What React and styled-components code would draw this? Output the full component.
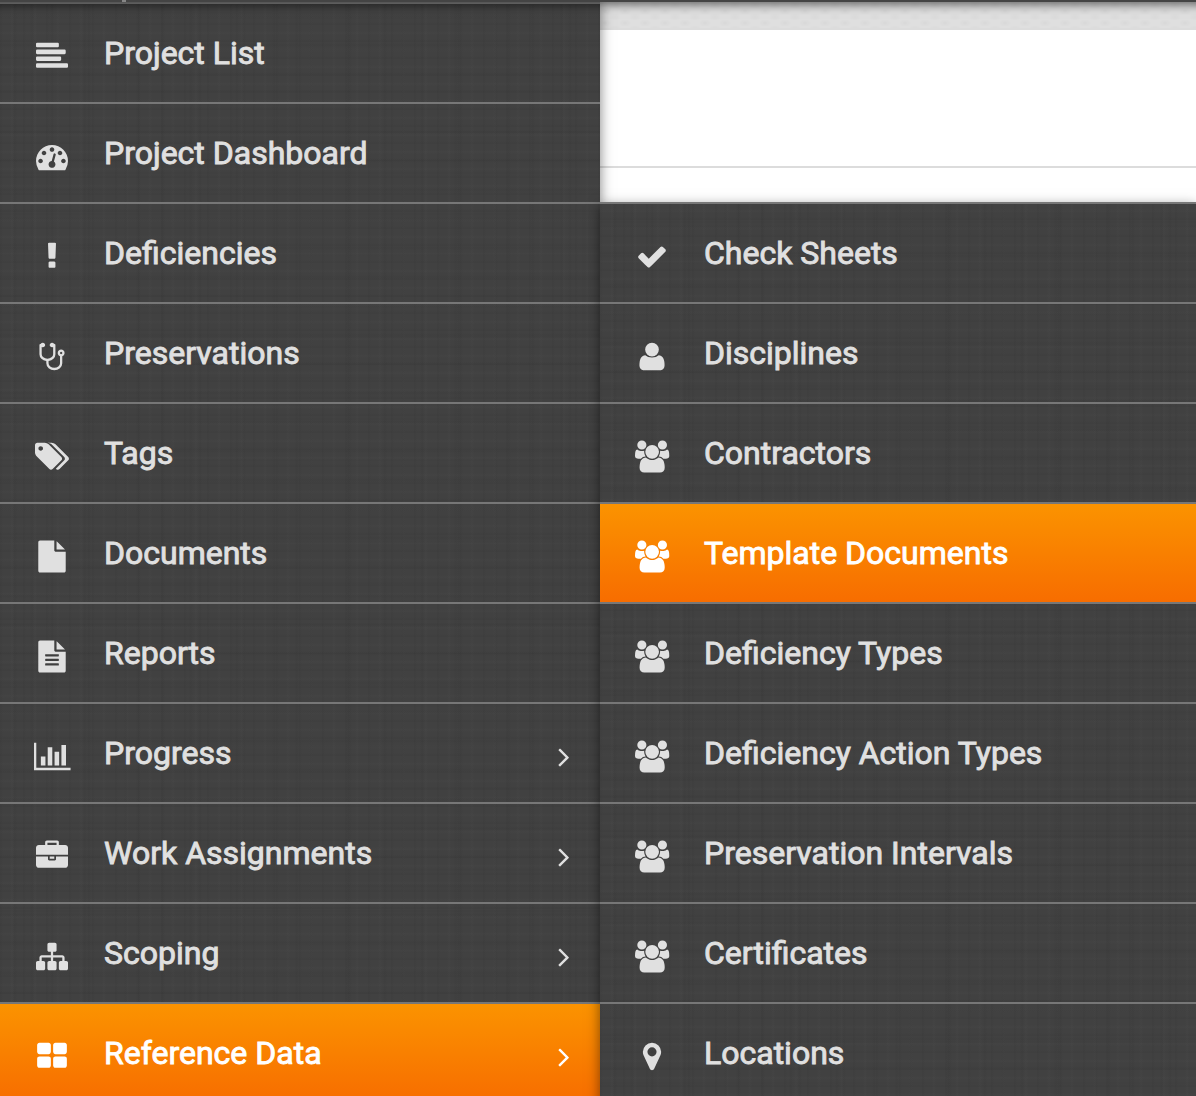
import React from 'react';
import styled, { createGlobalStyle, css } from 'styled-components';

const Global = createGlobalStyle`
  *, *::before, *::after { box-sizing: border-box; }
  html, body { margin: 0; padding: 0; }
  body { overflow: hidden; background: #fff; font-family: Roboto, "Liberation Sans", sans-serif; }
`;

const linen = css`
  background-color: #414141;
  background-image:
    repeating-linear-gradient(90deg, rgba(0,0,0,.03) 0 1px, transparent 3px 10px, rgba(255,255,255,.01) 12px, transparent 14px 23px),
    repeating-linear-gradient(90deg, transparent 0 13px, rgba(0,0,0,.035) 15px, transparent 17px 37px),
    repeating-linear-gradient(90deg, transparent 0 29px, rgba(0,0,0,.03) 32px, transparent 34px 53px),
    repeating-linear-gradient(0deg, rgba(0,0,0,.03) 0 1px, transparent 3px 7px, rgba(255,255,255,.01) 9px, transparent 11px 17px),
    repeating-linear-gradient(0deg, transparent 0 5px, rgba(0,0,0,.03) 7px, transparent 9px 29px),
    repeating-linear-gradient(0deg, transparent 0 19px, rgba(0,0,0,.025) 21px, transparent 23px 41px);
`;

const Page = styled.div`
  width: 1196px;
  height: 1096px;
  display: flex;
  flex-direction: column;
  overflow: hidden;
`;

const TopBar = styled.header`
  flex: none;
  height: 2px;
  padding-left: 122px;
  background: #444;
  box-shadow: 0 -18px 10px 20px rgba(0, 0, 0, .62);
  z-index: 3;
`;

const TopBarMark = styled.span`
  display: block;
  width: 4px;
  height: 2px;
  background: #868686;
`;

const Body = styled.div`
  flex: 1;
  min-height: 0;
  display: flex;
`;

const Sidebar = styled.nav`
  flex: none;
  width: 600px;
  border-top: 2px solid #8c8c8c;
  box-shadow: 0 0 12px rgba(0, 0, 0, .5);
  z-index: 1;
  ${linen}
`;

const Right = styled.div`
  flex: 1;
  min-width: 0;
  display: flex;
  flex-direction: column;
`;

const Content = styled.main`
  flex: none;
  height: 200px;
  background: #fff;
`;

const Strip = styled.div`
  height: 28px;
  border-bottom: 2px solid #dcdcdc;
  background-color: #dfdfdf;
  background-image:
    radial-gradient(ellipse at 5px 9px, rgba(0,0,0,.03) 0, transparent 6px),
    radial-gradient(ellipse at 15px 3px, rgba(0,0,0,.025) 0, transparent 6px);
  background-size: 20px 12px;
`;

const Panel = styled.div`
  height: 138px;
  border-bottom: 2px solid #dcdcdc;
`;

const Submenu = styled.nav`
  flex: 1;
  border-top: 2px solid #777;
  box-shadow: 0 4px 12px rgba(0, 0, 0, .5);
  z-index: 2;
  ${linen}
`;

const Item = styled.a`
  display: flex;
  align-items: flex-start;
  height: 100px;
  padding: 0 20px 0 32px;
  border-bottom: 2px solid #777;
  color: ${(p) => (p.$active ? '#fff' : '#e0e0e0')};
  ${(p) => p.$active && css`background: linear-gradient(#fb9300, #f76d00);`}
`;

const IconBox = styled.span`
  flex: none;
  width: 40px;
  display: flex;
  justify-content: center;
  padding-top: 36px;
`;

const Glyph = styled.svg`
  display: block;
  flex: none;
  height: 32px;
  width: ${(p) => p.$w / 56}px;
  overflow: visible;
  fill: currentColor;
`;

const Label = styled.span`
  flex: 1;
  padding: 30px 0 0 32px;
  font-size: 32px;
  line-height: 38px;
  white-space: nowrap;
  -webkit-text-stroke: .9px currentColor;
`;

const Arrow = styled.span`
  flex: none;
  width: 32px;
  padding-top: 36px;
`;

const paths = {
  align: 'M64 128h1152q64 0 64 64v128q0 64-64 64h-1152q-64 0-64-64v-128q0-64 64-64zM64 512h1536q64 0 64 64v128q0 64-64 64h-1536q-64 0-64-64v-128q0-64 64-64zM64 896h1280q64 0 64 64v128q0 64-64 64h-1280q-64 0-64-64v-128q0-64 64-64zM64 1280h1664q64 0 64 64v128q0 64-64 64h-1664q-64 0-64-64v-128q0-64 64-64z',
  gauge: 'M384 1152q0-53-37.5-90.5t-90.5-37.5-90.5 37.5-37.5 90.5 37.5 90.5 90.5 37.5 90.5-37.5 37.5-90.5zm192-448q0-53-37.5-90.5t-90.5-37.5-90.5 37.5-37.5 90.5 37.5 90.5 90.5 37.5 90.5-37.5 37.5-90.5zm428 481l101-382q6-26-7.5-48.5t-38.5-29.5-48 6.5-30 39.5l-101 382q-60 5-107 43.5t-63 98.5q-20 77 20 146t117 89 146-20 89-117q16-60-6-117t-72-91zm660-33q0-53-37.5-90.5t-90.5-37.5-90.5 37.5-37.5 90.5 37.5 90.5 90.5 37.5 90.5-37.5 37.5-90.5zm-640-640q0-53-37.5-90.5t-90.5-37.5-90.5 37.5-37.5 90.5 37.5 90.5 90.5 37.5 90.5-37.5 37.5-90.5zm448 192q0-53-37.5-90.5t-90.5-37.5-90.5 37.5-37.5 90.5 37.5 90.5 90.5 37.5 90.5-37.5 37.5-90.5zm320 448q0 261-141 483-19 29-54 29h-1402q-35 0-54-29-141-221-141-483 0-182 71-348t191-286 286-191 348-71 348 71 286 191 191 286 71 348z',
  bang: 'M1088 1248v224q0 26-19 45t-45 19h-256q-26 0-45-19t-19-45v-224q0-26 19-45t45-19h256q26 0 45 19t19 45zm30-1056l-28 768q-1 26-20.5 45t-45.5 19h-256q-26 0-45.5-19t-20.5-45l-28-768q-1-26 17.5-45t44.5-19h320q26 0 44.5 19t17.5 45z',
  steth: 'M1472 704q0-26-19-45t-45-19-45 19-19 45 19 45 45 19 45-19 19-45zm128 0q0 62-35.5 111t-92.5 70v395q0 159-131.5 271.5t-316.5 112.5-316.5-112.5-131.5-271.5v-132q-164-20-274-128t-110-252v-512q0-26 19-45t45-19q6 0 16 2 17-30 47-48t65-18q53 0 90.5 37.5t37.5 90.5-37.5 90.5-90.5 37.5q-33 0-64-18v402q0 106 94 181t226 75 226-75 94-181v-402q-31 18-64 18-53 0-90.5-37.5t-37.5-90.5 37.5-90.5 90.5-37.5q35 0 65 18t47 48q10-2 16-2 26 0 45 19t19 45v512q0 144-110 252t-274 128v132q0 106 94 181t226 75 226-75 94-181v-395q-57-21-92.5-70t-35.5-111q0-80 56-136t136-56 136 56 56 136z',
  tags: 'M448 448q0-53-37.5-90.5t-90.5-37.5-90.5 37.5-37.5 90.5 37.5 90.5 90.5 37.5 90.5-37.5 37.5-90.5zm1067 576q0 53-37 90l-491 492q-39 37-91 37-53 0-90-37l-715-716q-38-37-64.5-101t-26.5-117v-416q0-52 38-90t90-38h416q53 0 117 26.5t102 64.5l715 714q37 39 37 91zm384 0q0 53-37 90l-491 492q-39 37-91 37-36 0-59-14t-53-45l470-470q37-37 37-90 0-52-37-91l-715-714q-38-38-102-64.5t-117-26.5h224q53 0 117 26.5t102 64.5l715 714q37 39 37 91z',
  file: 'M1152 512v-472q22 14 36 28l408 408q14 14 28 36h-472zm-128 32q0 40 28 68t68 28h544v1056q0 40-28 68t-68 28h-1344q-40 0-68-28t-28-68v-1600q0-40 28-68t68-28h800v544z',
  fileText: 'M1596 476q14 14 28 36h-472v-472q22 14 36 28zm-476 164h544v1056q0 40-28 68t-68 28h-1344q-40 0-68-28t-28-68v-1600q0-40 28-68t68-28h800v544q0 40 28 68t68 28zm160 736v-64q0-14-9-23t-23-9h-704q-14 0-23 9t-9 23v64q0 14 9 23t23 9h704q14 0 23-9t9-23zm0-256v-64q0-14-9-23t-23-9h-704q-14 0-23 9t-9 23v64q0 14 9 23t23 9h704q14 0 23-9t9-23zm0-256v-64q0-14-9-23t-23-9h-704q-14 0-23 9t-9 23v64q0 14 9 23t23 9h704q14 0 23-9t9-23z',
  chart: 'M640 896v512h-256v-512h256zm384-512v1024h-256v-1024h256zm1024 1152v128h-2048v-1536h128v1408h1920zm-640-896v768h-256v-768h256zm384-384v1152h-256v-1152h256z',
  briefcase: 'M640 256h512v-128h-512v128zm1152 640v480q0 66-47 113t-113 47h-1472q-66 0-113-47t-47-113v-480h672v160q0 26 19 45t45 19h320q26 0 45-19t19-45v-160h672zm-768 0v128h-256v-128h256zm768-480v384h-1792v-384q0-66 47-113t113-47h352v-160q0-40 28-68t68-28h576q40 0 68 28t28 68v160h352q66 0 113 47t47 113z',
  sitemap: 'M1792 1248v320q0 40-28 68t-68 28h-320q-40 0-68-28t-28-68v-320q0-40 28-68t68-28h96v-192h-512v192h96q40 0 68 28t28 68v320q0 40-28 68t-68 28h-320q-40 0-68-28t-28-68v-320q0-40 28-68t68-28h96v-192h-512v192h96q40 0 68 28t28 68v320q0 40-28 68t-68 28h-320q-40 0-68-28t-28-68v-320q0-40 28-68t68-28h96v-192q0-52 38-90t90-38h512v-192h-96q-40 0-68-28t-28-68v-320q0-40 28-68t68-28h320q40 0 68 28t28 68v320q0 40-28 68t-68 28h-96v192h512q52 0 90 38t38 90v192h96q40 0 68 28t28 68z',
  grid: 'M832 1024v384q0 52-38 90t-90 38h-512q-52 0-90-38t-38-90v-384q0-52 38-90t90-38h512q52 0 90 38t38 90zm0-768v384q0 52-38 90t-90 38h-512q-52 0-90-38t-38-90v-384q0-52 38-90t90-38h512q52 0 90 38t38 90zm896 768v384q0 52-38 90t-90 38h-512q-52 0-90-38t-38-90v-384q0-52 38-90t90-38h512q52 0 90 38t38 90zm0-768v384q0 52-38 90t-90 38h-512q-52 0-90-38t-38-90v-384q0-52 38-90t90-38h512q52 0 90 38t38 90z',
  check: 'M1671 566q0 40-28 68l-724 724-136 136q-28 28-68 28t-68-28l-136-136-362-362q-28-28-28-68t28-68l136-136q28-28 68-28t68 28l294 295 656-657q28-28 68-28t68 28l136 136q28 28 28 68z',
  user: 'M1600 1399q0 109-62.5 187t-150.5 78h-982q-88 0-150.5-78t-62.5-187q0-85 8.5-160.5t31.5-152 58.5-131 94-89 134.5-34.5q131 128 377 128t377-128q76 0 134.5 34.5t94 89 58.5 131 31.5 152 8.5 160.5zm-320-887q0 159-112.5 271.5t-271.5 112.5-271.5-112.5-112.5-271.5 112.5-271.5 271.5-112.5 271.5 112.5 112.5 271.5z',
  users: 'M593 896q-162 5-265 128h-134q-82 0-138-40.5t-56-118.5q0-353 124-353 6 0 43.5 21t97.5 42.5 119 21.5q67 0 133-23-5 37-5 66 0 139 81 256zm1071 637q0 120-73 189.5t-194 69.5h-874q-121 0-194-69.5t-73-189.5q0-53 3.5-103.5t14-109 26.5-108.5 43-97.5 62-81 85.5-53.5 111.5-20q10 0 43 21.5t73 48 107 48 135 21.5 135-21.5 107-48 73-48 43-21.5q61 0 111.5 20t85.5 53.5 62 81 43 97.5 26.5 108.5 14 109 3.5 103.5zm-1024-1277q0 106-75 181t-181 75-181-75-75-181 75-181 181-75 181 75 75 181zm704 384q0 159-112.5 271.5t-271.5 112.5-271.5-112.5-112.5-271.5 112.5-271.5 271.5-112.5 271.5 112.5 112.5 271.5zm576 225q0 78-56 118.5t-138 40.5h-134q-103-123-265-128 81-117 81-256 0-29-5-66 66 23 133 23 59 0 119-21.5t97.5-42.5 43.5-21q124 0 124 353zm-128-609q0 106-75 181t-181 75-181-75-75-181 75-181 181-75 181 75 75 181z',
  marker: 'M1152 640q0-106-75-181t-181-75-181 75-75 181 75 181 181 75 181-75 75-181zm256 0q0 109-33 179l-364 774q-16 33-47.5 52t-67.5 19-67.5-19-46.5-52l-365-774q-33-70-33-179 0-212 150-362t362-150 362 150 150 362z',
  angle: 'M1171 960q0 13-10 23l-466 466q-10 10-23 10t-23-10l-50-50q-10-10-10-23t10-23l393-393-393-393q-10-10-10-23t10-23l50-50q10-10 23-10t23 10l466 466q10 10 10 23z',
};

const widths = { tags: 1920, users: 1920, chart: 2048 };

function Icon({ name }) {
  const w = widths[name] || 1792;
  return (
    <Glyph $w={w} viewBox={`0 -24 ${w} 1792`} aria-hidden="true">
      <path d={paths[name]} />
    </Glyph>
  );
}

function MenuItem({ icon, label, active, expandable }) {
  return (
    <Item $active={active}>
      <IconBox><Icon name={icon} /></IconBox>
      <Label>{label}</Label>
      {expandable && <Arrow><Icon name="angle" /></Arrow>}
    </Item>
  );
}

const mainItems = [
  { icon: 'align', label: 'Project List' },
  { icon: 'gauge', label: 'Project Dashboard' },
  { icon: 'bang', label: 'Deficiencies' },
  { icon: 'steth', label: 'Preservations' },
  { icon: 'tags', label: 'Tags' },
  { icon: 'file', label: 'Documents' },
  { icon: 'fileText', label: 'Reports' },
  { icon: 'chart', label: 'Progress', expandable: true },
  { icon: 'briefcase', label: 'Work Assignments', expandable: true },
  { icon: 'sitemap', label: 'Scoping', expandable: true },
  { icon: 'grid', label: 'Reference Data', expandable: true, active: true },
];

const subItems = [
  { icon: 'check', label: 'Check Sheets' },
  { icon: 'user', label: 'Disciplines' },
  { icon: 'users', label: 'Contractors' },
  { icon: 'users', label: 'Template Documents', active: true },
  { icon: 'users', label: 'Deficiency Types' },
  { icon: 'users', label: 'Deficiency Action Types' },
  { icon: 'users', label: 'Preservation Intervals' },
  { icon: 'users', label: 'Certificates' },
  { icon: 'marker', label: 'Locations' },
];

export default function App() {
  return (
    <Page>
      <Global />
      <TopBar><TopBarMark /></TopBar>
      <Body>
        <Sidebar>
          {mainItems.map((item) => <MenuItem key={item.label} {...item} />)}
        </Sidebar>
        <Right>
          <Content>
            <Strip />
            <Panel />
          </Content>
          <Submenu>
            {subItems.map((item) => <MenuItem key={item.label} {...item} />)}
          </Submenu>
        </Right>
      </Body>
    </Page>
  );
}
